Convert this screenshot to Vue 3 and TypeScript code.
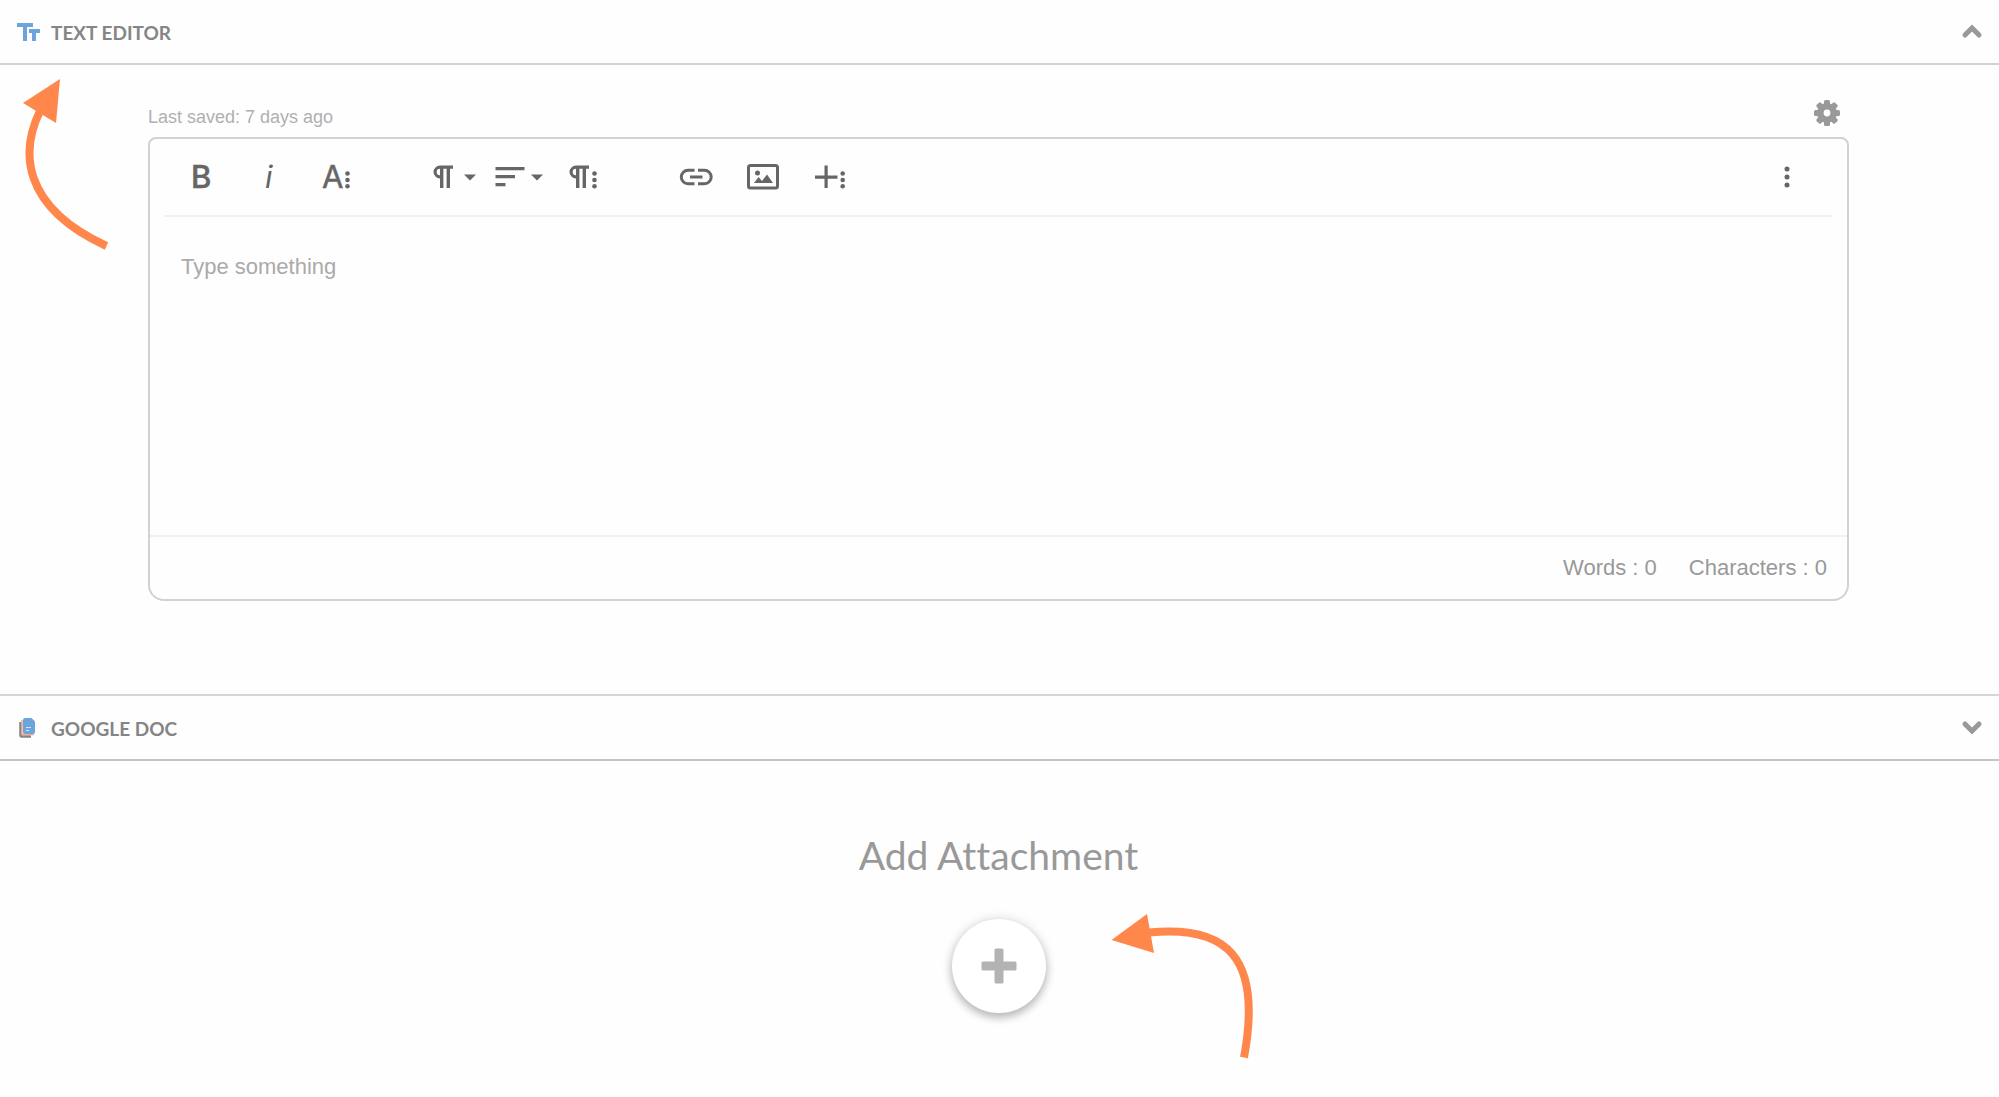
<script setup lang="ts">
import { computed, ref } from 'vue'

const textOpen = ref(true)
const docOpen = ref(false)
const content = ref('')

const words = computed(() => content.value.split(/\s+/).filter(Boolean).length)
const characters = computed(() => content.value.length)
</script>

<template>
  <main class="page">
    <section class="panel">
      <h2 class="heading">
        <button class="bar" type="button" :aria-expanded="textOpen" @click="textOpen = !textOpen">
          <svg class="bar-icon" width="24" height="24" viewBox="0 0 24 24" aria-hidden="true">
            <path d="M0 3h16v4h-6v14H6V7H0zM12 9h11v4h-4v8h-4v-8h-3z" fill="#6aa5dc" />
          </svg>
          <span class="bar-title">TEXT EDITOR</span>
          <svg class="chevron" width="24" height="16" viewBox="0 0 24 16" aria-hidden="true">
            <path d="M5 11l7-7 7 7" :class="{ closed: !textOpen }" />
          </svg>
        </button>
      </h2>

      <div v-if="textOpen" class="body">
        <div class="meta">
          <span class="saved">Last saved: 7 days ago</span>
          <button class="gear" type="button" aria-label="Editor settings">
            <svg width="26" height="26" viewBox="-13 -13 26 26" aria-hidden="true">
              <g fill="#999">
                <rect v-for="a in [0, 45, 90, 135]" :key="a" x="-3" y="-13" width="6" height="26" rx="1.5" :transform="`rotate(${a})`" />
                <circle r="10" />
              </g>
              <circle r="3.4" fill="#fff" />
            </svg>
          </button>
        </div>

        <div class="editor">
          <div class="toolbar" role="toolbar" aria-label="Formatting">
            <div class="group">
              <button class="tool" type="button" aria-label="Bold">
                <svg width="67" height="76" viewBox="0 0 67 76"><text x="22" y="49" class="glyph bold">B</text></svg>
              </button>
              <button class="tool" type="button" aria-label="Italic">
                <svg width="67" height="76" viewBox="0 0 67 76"><text x="29" y="49" class="glyph italic">i</text></svg>
              </button>
              <button class="tool" type="button" aria-label="More text">
                <svg width="67" height="76" viewBox="0 0 67 76">
                  <text x="19" y="49" class="glyph">A</text>
                  <circle cx="44.500" cy="34.500" r="2.300" /><circle cx="44.500" cy="41" r="2.300" /><circle cx="44.500" cy="47.300" r="2.300" />
                </svg>
              </button>
            </div>
            <div class="group">
              <button class="tool" type="button" aria-label="Paragraph format">
                <svg width="67" height="76" viewBox="0 0 67 76">
                  <path d="M37 26.500v3.200h-3V49h-3.400V29.700h-3.200V49h-3.400V39.500a6.500 6.500 0 0 1 0-13zM24 29.700a3.300 3.300 0 0 0 0 6.600z" />
                  <path d="M48 35.500h12l-6 6z" />
                </svg>
              </button>
              <button class="tool" type="button" aria-label="Align">
                <svg width="67" height="76" viewBox="0 0 67 76">
                  <path d="M12.500 28h29v3.200h-29zM12.500 36h19.500v3.200h-19.500zM12.500 44h10v3.200h-10zM48 35.500h12l-6 6z" />
                </svg>
              </button>
              <button class="tool" type="button" aria-label="More paragraph">
                <svg width="67" height="76" viewBox="0 0 67 76">
                  <path d="M39 26.500v3.200h-3V49h-3.400V29.700h-3.200V49h-3.400V39.500a6.500 6.500 0 0 1 0-13zM26 29.700a3.300 3.300 0 0 0 0 6.600z" />
                  <circle cx="44.500" cy="34.500" r="2.300" /><circle cx="44.500" cy="41" r="2.300" /><circle cx="44.500" cy="47.300" r="2.300" />
                </svg>
              </button>
            </div>
            <div class="group">
              <button class="tool" type="button" aria-label="Insert link">
                <svg width="67" height="76" viewBox="0 0 67 76">
                  <path d="M31.500 31.300h-6.500a6.700 6.700 0 0 0 0 13.400h6.500M35 31.300h6.500a6.700 6.700 0 0 1 0 13.400H35M27 38h12.500" fill="none" stroke="#666" stroke-width="3" />
                </svg>
              </button>
              <button class="tool" type="button" aria-label="Insert image">
                <svg width="67" height="76" viewBox="0 0 67 76">
                  <rect x="18.500" y="26.500" width="29" height="22.500" rx="2" fill="none" stroke="#666" stroke-width="3" />
                  <circle cx="27.500" cy="34" r="2.500" />
                  <path d="M24 44l4.500-6 3.500 4 5-6.500 6 8.500z" />
                </svg>
              </button>
              <button class="tool" type="button" aria-label="More rich">
                <svg width="67" height="76" viewBox="0 0 67 76">
                  <path d="M18 36.500h9.500V26.500h3.200v10h9.800v3.200h-9.800V49h-3.200v-9.300H18z" />
                  <circle cx="45.700" cy="34.500" r="2.300" /><circle cx="45.700" cy="41" r="2.300" /><circle cx="45.700" cy="47.300" r="2.300" />
                </svg>
              </button>
            </div>
            <div class="group last">
              <button class="tool" type="button" aria-label="More misc">
                <svg width="67" height="76" viewBox="0 0 67 76">
                  <circle cx="33" cy="30" r="2.500" /><circle cx="33" cy="38" r="2.500" /><circle cx="33" cy="46" r="2.500" />
                </svg>
              </button>
            </div>
          </div>

          <textarea v-model="content" class="area" placeholder="Type something" aria-label="Text editor"></textarea>

          <div class="counter">
            <span>Words : {{ words }}</span>
            <span>Characters : {{ characters }}</span>
          </div>
        </div>
      </div>

      <svg class="arrow arrow-header" width="90" height="174" viewBox="20 76 90 174" aria-hidden="true">
        <path d="M40 111C21 150 20 206 106.500 246" fill="none" stroke="#ff874b" stroke-width="8" />
        <path d="M60 79L23 103l33 20z" fill="#ff874b" />
      </svg>
    </section>

    <section class="panel">
      <h2 class="heading">
        <button class="bar doc" type="button" :aria-expanded="docOpen" @click="docOpen = !docOpen">
          <svg class="bar-icon" width="24" height="24" viewBox="0 0 24 24" aria-hidden="true">
            <path d="M3.500 6v13.500q0 1 1 1H14" fill="none" stroke="#858585" stroke-width="2.500" />
            <path d="M5 4v14.500h12" fill="none" stroke="#f5a889" stroke-width="1.500" />
            <path d="M8 2h6.500l3.500 3.500V16q0 2-2 2H8q-2 0-2-2V4q0-2 2-2z" fill="#6aa5dc" />
            <path d="M9 11.500h5M9 14.500h3" stroke="#d5e5f5" stroke-width="1.200" />
          </svg>
          <span class="bar-title">GOOGLE DOC</span>
          <svg class="chevron" width="24" height="16" viewBox="0 0 24 16" aria-hidden="true">
            <path d="M5 4l7 7 7-7" :class="{ closed: docOpen }" />
          </svg>
        </button>
      </h2>
    </section>

    <section class="attach">
      <h1 class="attach-title">Add Attachment</h1>
      <button class="add" type="button" aria-label="Add attachment">
        <svg width="36" height="36" viewBox="0 0 36 36" aria-hidden="true">
          <rect x="0.500" y="13.500" width="35" height="9" rx="1.500" />
          <rect x="13.500" y="0.500" width="9" height="35" rx="1.500" />
        </svg>
      </button>
      <svg class="arrow arrow-add" width="144" height="150" viewBox="1110 910 144 150" aria-hidden="true">
        <path d="M1149 932.500C1225 925 1263 955 1244 1057.500" fill="none" stroke="#ff874b" stroke-width="8" />
        <path d="M1111.500 940L1147 914l7 39z" fill="#ff874b" />
      </svg>
    </section>
  </main>
</template>

<style>
body {
  margin: 0;
  background: #fefefe;
}
</style>

<style scoped>
.page {
  min-height: 100vh;
  color: #999;
  font-family: "Liberation Sans", Arial, sans-serif;
}

button {
  padding: 0;
  border: 0;
  background: none;
  cursor: pointer;
}

.panel {
  position: relative;
}

.heading {
  margin: 0;
}

.bar {
  display: flex;
  align-items: center;
  box-sizing: border-box;
  width: 100%;
  height: 65px;
  padding: 0 15px 0 17px;
  border-bottom: 2px solid #d2d2d2;
  color: #858585;
}

.bar.doc {
  height: 67px;
  border-top: 2px solid #d6d6d6;
  border-bottom-color: #c4c4c4;
}

.bar-icon {
  margin-right: 10px;
}

.bar-title {
  padding-top: 2px;
  font: 700 19px/24px Lato, sans-serif;
}

.chevron {
  margin-left: auto;
}

.chevron path {
  fill: none;
  stroke: #999;
  stroke-width: 5;
  stroke-linecap: round;
  transform-origin: center;
}

.chevron .closed {
  transform: rotate(180deg);
}

.body {
  padding: 0 150px 93px 148px;
}

.meta {
  display: flex;
  align-items: flex-end;
  justify-content: space-between;
  height: 72px;
  padding-right: 9px;
}

.saved {
  padding-bottom: 10px;
  color: #b0b0b0;
  font-size: 18px;
  line-height: 20px;
}

.gear {
  padding-bottom: 11px;
}

.gear svg,
.tool svg {
  display: block;
}

.editor {
  border: 2px solid #d2d2d2;
  border-radius: 8px 8px 16px 16px;
}

.toolbar {
  display: flex;
  gap: 46px;
  margin: 0 14px;
  padding: 0 12px 0 5px;
  border-bottom: 2px solid #f0f0f0;
}

.group {
  display: flex;
}

.group.last {
  margin-left: auto;
}

.tool {
  fill: #666;
}

.glyph {
  font: 400 31px Inter, sans-serif;
  stroke: #666;
  stroke-width: 0.5px;
}

.glyph.bold {
  font-weight: 500;
}

.glyph.italic {
  font-style: italic;
  stroke: none;
}

.area {
  display: block;
  box-sizing: border-box;
  width: 100%;
  height: 318px;
  padding: 37px 31px;
  border: 0;
  outline: 0;
  resize: none;
  background: none;
  color: #555;
  font: 22px/26px "Liberation Sans", Arial, sans-serif;
}

.area::placeholder {
  color: #aaa;
  opacity: 1;
}

.counter {
  display: flex;
  justify-content: flex-end;
  gap: 32px;
  padding: 17px 20px;
  border-top: 2px solid #f0f0f0;
  font-size: 22px;
  line-height: 28px;
}

.attach {
  position: relative;
  display: flex;
  flex-direction: column;
  align-items: center;
  padding-right: 2px;
}

.attach-title {
  margin: 70px 0 0;
  font: 400 39px/48px Lato, sans-serif;
  font-variant-ligatures: none;
}

.add {
  display: flex;
  align-items: center;
  justify-content: center;
  width: 94px;
  height: 94px;
  margin: 40px 0 80px;
  border-radius: 50%;
  background: #fff;
  fill: #b3b3b3;
  box-shadow: 0 5px 8px rgba(0, 0, 0, 0.22), 0 0 12px rgba(0, 0, 0, 0.14);
}

.arrow {
  position: absolute;
  pointer-events: none;
}

.arrow-header {
  top: 76px;
  left: 20px;
}

.arrow-add {
  top: 149px;
  left: calc(50% + 110px);
}
</style>
